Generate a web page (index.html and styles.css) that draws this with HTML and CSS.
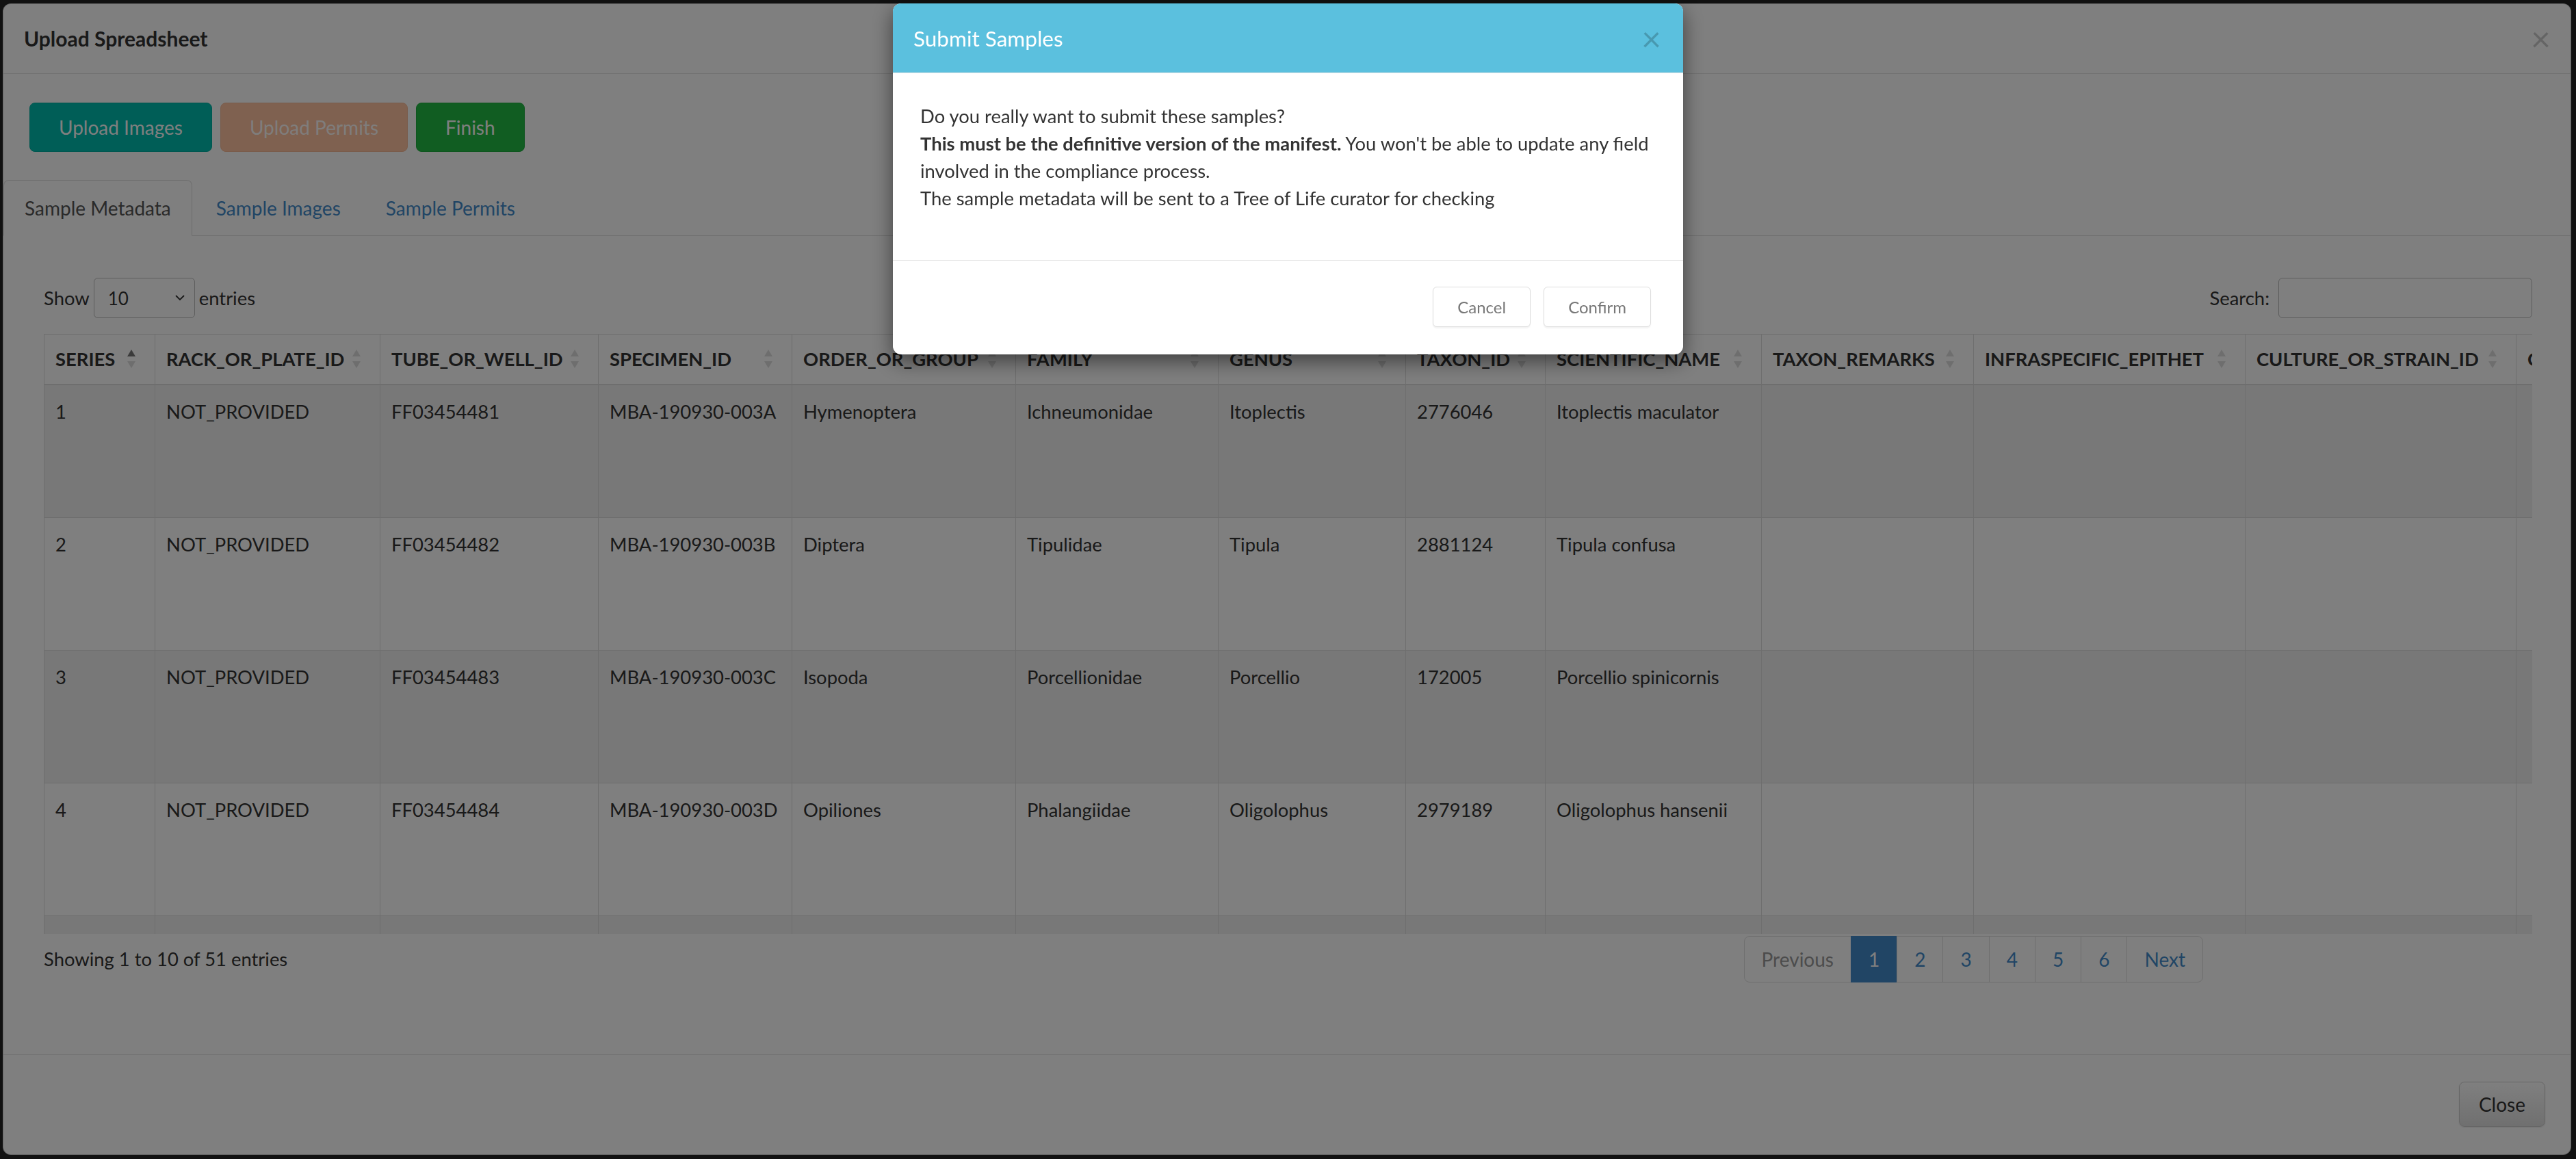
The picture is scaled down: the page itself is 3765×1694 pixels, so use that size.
FILE: index.html
```html
<!DOCTYPE html>
<html lang="en">
<head>
<meta charset="utf-8">
<title>Upload Spreadsheet</title>
<link rel="stylesheet" href="styles.css">
</head>
<body>
<div class="page">
  <div class="modal-outer">
    <div class="mo-header">
      <h4 class="mo-title">Upload Spreadsheet</h4>
      <span class="close">×</span>
    </div>
    <div class="mo-body">
      <div class="toolbar">
        <button class="btn btn-teal">Upload Images</button>
        <button class="btn btn-salmon">Upload Permits</button>
        <button class="btn btn-green">Finish</button>
      </div>
      <ul class="tabs">
        <li class="tab active">Sample Metadata</li>
        <li class="tab">Sample Images</li>
        <li class="tab">Sample Permits</li>
      </ul>
      <div class="pane">
        <div class="dt-top">
          <div class="dt-length">Show <span class="select"><span>10</span><svg class="chev" width="14" height="9" viewBox="0 0 14 9"><polyline points="1,1 7,7 13,1" fill="none" stroke="#333" stroke-width="1.8"/></svg></span> entries</div>
          <div class="dt-search">Search: <span class="input"></span></div>
        </div>
        <div class="dt-scroll">
          <table class="dt">
            <colgroup>
              <col class="w162"><col class="w329"><col class="w319"><col class="w283"><col class="w327"><col class="w296"><col class="w274"><col class="w204"><col class="w316"><col class="w310"><col class="w397"><col class="w396"><col class="w300">
            </colgroup>
            <thead>
              <tr>
                <th><div class="thc"><span>SERIES</span><svg class="sort" width="12" height="30" viewBox="0 0 12 30"><polygon points="0,11 6,1 12,11" class="on"/><polygon points="0,18 12,18 6,28"/></svg></div></th>
                <th><div class="thc"><span>RACK_OR_PLATE_ID</span><svg class="sort" width="12" height="30" viewBox="0 0 12 30"><polygon points="0,11 6,1 12,11"/><polygon points="0,18 12,18 6,28"/></svg></div></th>
                <th><div class="thc"><span>TUBE_OR_WELL_ID</span><svg class="sort" width="12" height="30" viewBox="0 0 12 30"><polygon points="0,11 6,1 12,11"/><polygon points="0,18 12,18 6,28"/></svg></div></th>
                <th><div class="thc"><span>SPECIMEN_ID</span><svg class="sort" width="12" height="30" viewBox="0 0 12 30"><polygon points="0,11 6,1 12,11"/><polygon points="0,18 12,18 6,28"/></svg></div></th>
                <th><div class="thc"><span>ORDER_OR_GROUP</span><svg class="sort" width="12" height="30" viewBox="0 0 12 30"><polygon points="0,11 6,1 12,11"/><polygon points="0,18 12,18 6,28"/></svg></div></th>
                <th><div class="thc"><span>FAMILY</span><svg class="sort" width="12" height="30" viewBox="0 0 12 30"><polygon points="0,11 6,1 12,11"/><polygon points="0,18 12,18 6,28"/></svg></div></th>
                <th><div class="thc"><span>GENUS</span><svg class="sort" width="12" height="30" viewBox="0 0 12 30"><polygon points="0,11 6,1 12,11"/><polygon points="0,18 12,18 6,28"/></svg></div></th>
                <th><div class="thc"><span>TAXON_ID</span><svg class="sort" width="12" height="30" viewBox="0 0 12 30"><polygon points="0,11 6,1 12,11"/><polygon points="0,18 12,18 6,28"/></svg></div></th>
                <th><div class="thc"><span>SCIENTIFIC_NAME</span><svg class="sort" width="12" height="30" viewBox="0 0 12 30"><polygon points="0,11 6,1 12,11"/><polygon points="0,18 12,18 6,28"/></svg></div></th>
                <th><div class="thc"><span>TAXON_REMARKS</span><svg class="sort" width="12" height="30" viewBox="0 0 12 30"><polygon points="0,11 6,1 12,11"/><polygon points="0,18 12,18 6,28"/></svg></div></th>
                <th><div class="thc"><span>INFRASPECIFIC_EPITHET</span><svg class="sort" width="12" height="30" viewBox="0 0 12 30"><polygon points="0,11 6,1 12,11"/><polygon points="0,18 12,18 6,28"/></svg></div></th>
                <th><div class="thc"><span>CULTURE_OR_STRAIN_ID</span><svg class="sort" width="12" height="30" viewBox="0 0 12 30"><polygon points="0,11 6,1 12,11"/><polygon points="0,18 12,18 6,28"/></svg></div></th>
                <th><div class="thc"><span>COLLECTED_BY</span><svg class="sort" width="12" height="30" viewBox="0 0 12 30"><polygon points="0,11 6,1 12,11"/><polygon points="0,18 12,18 6,28"/></svg></div></th>
              </tr>
            </thead>
            <tbody>
              <tr class="odd"><td>1</td><td>NOT_PROVIDED</td><td>FF03454481</td><td>MBA-190930-003A</td><td>Hymenoptera</td><td>Ichneumonidae</td><td>Itoplectis</td><td>2776046</td><td>Itoplectis maculator</td><td></td><td></td><td></td><td></td></tr>
              <tr><td>2</td><td>NOT_PROVIDED</td><td>FF03454482</td><td>MBA-190930-003B</td><td>Diptera</td><td>Tipulidae</td><td>Tipula</td><td>2881124</td><td>Tipula confusa</td><td></td><td></td><td></td><td></td></tr>
              <tr class="odd"><td>3</td><td>NOT_PROVIDED</td><td>FF03454483</td><td>MBA-190930-003C</td><td>Isopoda</td><td>Porcellionidae</td><td>Porcellio</td><td>172005</td><td>Porcellio spinicornis</td><td></td><td></td><td></td><td></td></tr>
              <tr><td>4</td><td>NOT_PROVIDED</td><td>FF03454484</td><td>MBA-190930-003D</td><td>Opiliones</td><td>Phalangiidae</td><td>Oligolophus</td><td>2979189</td><td>Oligolophus hansenii</td><td></td><td></td><td></td><td></td></tr>
              <tr class="odd"><td>5</td><td>NOT_PROVIDED</td><td>FF03454485</td><td>MBA-190930-003E</td><td>Hymenoptera</td><td>Ichneumonidae</td><td>Itoplectis</td><td>2776046</td><td>Itoplectis maculator</td><td></td><td></td><td></td><td></td></tr>
            </tbody>
          </table>
        </div>
        <div class="dt-bottom">
          <div class="dt-info">Showing 1 to 10 of 51 entries</div>
          <ul class="pagination">
            <li class="pg disabled">Previous</li>
            <li class="pg active">1</li>
            <li class="pg">2</li>
            <li class="pg">3</li>
            <li class="pg">4</li>
            <li class="pg">5</li>
            <li class="pg">6</li>
            <li class="pg">Next</li>
          </ul>
        </div>
      </div>
    </div>
    <div class="mo-footer">
      <button class="btn btn-default">Close</button>
    </div>
  </div>
</div>

<div class="backdrop"></div>

<div class="modal-wrap">
  <div class="modal-inner">
    <div class="mi-header">
      <h4 class="mi-title">Submit Samples</h4>
      <span class="close">×</span>
    </div>
    <div class="mi-body">
      <p>Do you really want to submit these samples?<br><strong>This must be the definitive version of the manifest.</strong> You won't be able to update any field involved in the compliance process.<br>The sample metadata will be sent to a Tree of Life curator for checking</p>
    </div>
    <div class="mi-footer">
      <button class="btn-sm">Cancel</button>
      <button class="btn-sm">Confirm</button>
    </div>
  </div>
</div>
</body>
</html>
```

FILE: styles.css
```css
* { box-sizing: border-box; }
html, body { margin: 0; padding: 0; }
body {
  background: #222;
  font-family: Lato, "Open Sans", "Liberation Sans", sans-serif;
  font-size: 28px;
  line-height: 40px;
  color: #333;
  height: 1694px;
  overflow: hidden;
}
.page {
  height: 1694px;
  padding: 5px 7px 6px 4px;
}
.modal-outer {
  height: 100%;
  background: #fff;
  border: 1px solid rgba(0,0,0,.2);
  border-radius: 12px;
  display: flex;
  flex-direction: column;
  overflow: hidden;
}
.mo-header {
  height: 102px;
  flex: none;
  display: flex;
  align-items: center;
  justify-content: space-between;
  padding: 0 29px 2px 30px;
  border-bottom: 1px solid #e5e5e5;
}
.mo-title {
  margin: 0;
  font-size: 30px;
  font-weight: 700;
  line-height: 40px;
  color: #333;
}
.close {
  font-size: 50px;
  font-weight: 400;
  line-height: 1;
  color: #000;
  opacity: .2;
}
.mo-body { flex: 1; }
.toolbar {
  display: flex;
  gap: 12px;
  padding: 42px 0 0 38px;
}
.btn {
  font-family: inherit;
  font-size: 28px;
  height: 72px;
  padding: 0 42px;
  border: 1px solid transparent;
  border-radius: 8px;
  color: #fff;
}
.btn-teal { background: #00bcae; border-color: #00aea1; }
.btn-salmon { background: #fec2a0; border-color: #f5b896; color: rgba(255,255,255,.95); }
.btn-green { background: #22ba44; border-color: #1fab3e; }
.tabs {
  list-style: none;
  margin: 41px 0 0 0;
  padding: 0;
  display: flex;
  border-bottom: 1px solid #ddd;
}
.tab {
  padding: 20px 30px;
  margin-right: 4px;
  margin-bottom: -1px;
  border: 1px solid transparent;
  border-radius: 8px 8px 0 0;
  color: #428bca;
}
.tab.active {
  color: #555;
  background: #fff;
  border-color: #ddd #ddd transparent;
}
.pane { padding: 0 56px 0 59px; }
.dt-top {
  margin-top: 61px;
  height: 59px;
  display: flex;
  align-items: center;
  justify-content: space-between;
  font-size: 27.4px;
}
.dt-length, .dt-search {
  display: flex;
  align-items: center;
  gap: 6px;
}
.dt-search { gap: 13px; }
.select {
  width: 148px;
  height: 59px;
  border: 1px solid #bbb;
  border-radius: 6px;
  display: flex;
  align-items: center;
  justify-content: space-between;
  padding: 0 14px 0 20px;
  font-size: 26px;
}
.input {
  width: 371px;
  height: 59px;
  border: 1px solid #bbb;
  border-radius: 6px;
}
.dt-scroll {
  margin-top: 23px;
  height: 877px;
  overflow: hidden;
}
.dt {
  border-collapse: collapse;
  table-layout: fixed;
  width: 3913px;
  font-size: 27.4px;
}
.w162 { width: 162px; } .w329 { width: 329px; } .w319 { width: 319px; } .w283 { width: 283px; }
.w327 { width: 327px; } .w296 { width: 296px; } .w274 { width: 274px; } .w204 { width: 204px; }
.w316 { width: 316px; } .w310 { width: 310px; } .w397 { width: 397px; } .w396 { width: 396px; }
.w300 { width: 300px; }
.dt th {
  text-align: left;
  font-weight: 700;
  padding: 16px 28px 16px 16px;
  border: 1px solid #ddd;
  border-bottom: 2px solid #ddd;
  white-space: nowrap;
  background: #fff;
}
.thc {
  display: flex;
  align-items: center;
  justify-content: space-between;
}
.sort polygon { fill: #ddd; }
.sort polygon.on { fill: #777; }
.dt td {
  vertical-align: top;
  padding: 19px 16px;
  border: 1px solid #ddd;
  height: 194px;
  white-space: nowrap;
  overflow: hidden;
}
.dt tr.odd td { background: #f0f0f0; }
.dt-bottom {
  margin-top: 3px;
  display: flex;
  align-items: center;
}
.dt-info { flex: 1; font-size: 27.4px; }
.pagination {
  list-style: none;
  margin: 0 481px 0 0;
  padding: 0;
  display: flex;
}
.pg {
  height: 68px;
  line-height: 66px;
  padding: 0 25px;
  border: 1px solid #ddd;
  margin-left: -1px;
  color: #428bca;
  background: #fff;
}
.pg:first-child { border-radius: 8px 0 0 8px; margin-left: 0; }
.pg:last-child { border-radius: 0 8px 8px 0; }
.pg.disabled { color: #999; }
.pg.active { background: #428bca; border-color: #428bca; color: #fff; }
.mo-footer {
  flex: none;
  border-top: 1px solid #e5e5e5;
  padding: 39px 37px 40px;
  display: flex;
  justify-content: flex-end;
}
.btn-default {
  height: 66px;
  padding: 0 28px;
  color: #333;
  background: linear-gradient(#ffffff, #e0e0e0);
  border-color: #ccc;
  box-shadow: inset 0 1px 0 rgba(255,255,255,.15), 0 1px 2px rgba(0,0,0,.1);
}
.backdrop {
  position: fixed;
  inset: 0;
  background: rgba(0,0,0,.5);
}
.modal-wrap {
  position: fixed;
  inset: 0;
  display: flex;
  justify-content: center;
  align-items: flex-start;
  padding-top: 5px;
}
.modal-inner {
  width: 1155px;
  background: #fff;
  border-radius: 12px;
  box-shadow: 0 10px 30px rgba(0,0,0,.5);
  overflow: hidden;
}
.mi-header {
  height: 102px;
  background: #5bc0de;
  border-bottom: 1px solid #e5e5e5;
  display: flex;
  align-items: center;
  justify-content: space-between;
  padding: 0 32px 0 30px;
}
.mi-title {
  margin: 0;
  font-size: 31.5px;
  font-weight: 400;
  color: #fff;
}
.mi-body {
  padding: 43px 36px 70px 40px;
  font-size: 27.4px;
}
.mi-body p { margin: 0; }
.mi-footer {
  border-top: 1px solid #e5e5e5;
  padding: 38px 47px 40px;
  display: flex;
  justify-content: flex-end;
  gap: 19px;
}
.btn-sm {
  font-family: inherit;
  font-size: 24px;
  height: 59px;
  padding: 0 35px;
  background: #fff;
  color: #777;
  border: 1px solid #ddd;
  border-radius: 6px;
  box-shadow: 0 2px 2px rgba(0,0,0,.05);
}
```
